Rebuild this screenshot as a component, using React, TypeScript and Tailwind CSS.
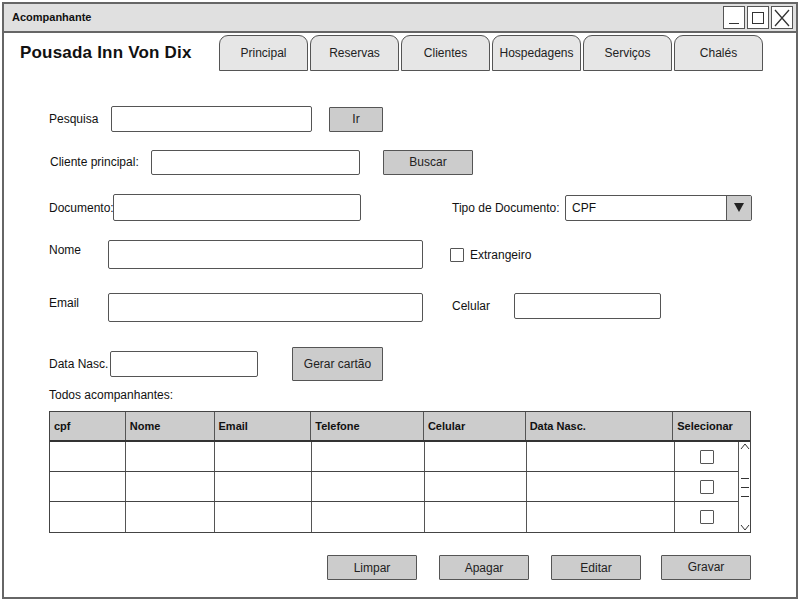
import React from "react"

const font = { fontFamily: '"Comic Sans MS", "Liberation Sans", sans-serif' }

const tabs = ["Principal", "Reservas", "Clientes", "Hospedagens", "Serviços", "Chalés"]

const columns = [
  { label: "cpf", w: "w-[76px]" },
  { label: "Nome", w: "w-[89px]" },
  { label: "Email", w: "w-[97px]" },
  { label: "Telefone", w: "w-[113px]" },
  { label: "Celular", w: "w-[102px]" },
  { label: "Data Nasc.", w: "w-[148px]" },
  { label: "Selecionar", w: "w-[77px]" },
]

function Input({ className }: { className: string }) {
  return <div className={"bg-white border-[1.5px] border-[#555] rounded-[2px] " + className} />
}

function Button({ label, className }: { label: string; className: string }) {
  return (
    <div className={"bg-[#cccccc] border-[1.5px] border-[#555] rounded-[1px] flex items-center justify-center text-[12px] text-[#222] " + className}>
      {label}
    </div>
  )
}

function Checkbox() {
  return <div className="w-[14px] h-[14px] border-[1.5px] border-[#555] bg-white rounded-[1px]" />
}

export default function App() {
  return (
    <div className="w-[800px] h-[600px] bg-white overflow-hidden text-[#111]" style={font}>
      <div className="ml-[2px] mt-[2px] w-[796px] h-[597px] border-2 border-[#666] flex flex-col">
        {/* Title bar */}
        <div className="h-[29px] bg-[#e0e0e0] border-b-2 border-[#666] flex items-center justify-between pl-[8px] pr-[3px]">
          <span className="text-[11px] font-bold">Acompanhante</span>
          <div className="flex gap-[2px]">
            <div className="w-[22px] h-[23px] border-[1.5px] border-[#555] bg-white flex items-end justify-center pb-[4px]">
              <div className="w-[10px] h-[1.5px] bg-[#333]" />
            </div>
            <div className="w-[22px] h-[23px] border-[1.5px] border-[#555] bg-white flex items-center justify-center">
              <div className="w-[12px] h-[12px] border-[1.5px] border-[#333]" />
            </div>
            <div className="w-[22px] h-[23px] border-[1.5px] border-[#555] bg-white flex items-center justify-center">
              <svg width="16" height="18" viewBox="0 0 16 18">
                <path d="M1 1 L15 17 M15 1 L1 17" stroke="#333" strokeWidth="1.3" fill="none" />
              </svg>
            </div>
          </div>
        </div>

        {/* Header with tabs */}
        <div className="mt-[2px] h-[36px] flex items-end">
          <div className="w-[215px] pl-[16px] self-center text-[17px] font-bold tracking-[0.2px]">Pousada Inn Von Dix</div>
          <div className="flex gap-[2px]">
            {tabs.map((t) => (
              <div
                key={t}
                className="w-[89px] h-[36px] bg-[#e6e6e6] border-[1.5px] border-[#555] rounded-t-[9px] flex items-center justify-center text-[12px] text-[#222]"
              >
                {t}
              </div>
            ))}
          </div>
        </div>

        {/* Pesquisa */}
        <div className="mt-[35px] pl-[45px] flex items-center h-[26px]">
          <span className="w-[62px] text-[12px]">Pesquisa</span>
          <Input className="w-[201px] h-[26px]" />
          <Button label="Ir" className="ml-[17px] w-[54px] h-[25px]" />
        </div>

        {/* Cliente principal */}
        <div className="mt-[17px] pl-[46px] flex items-center h-[26px]">
          <span className="w-[101px] text-[12px]">Cliente principal:</span>
          <Input className="w-[209px] h-[25px]" />
          <Button label="Buscar" className="ml-[23px] w-[90px] h-[25px]" />
        </div>

        {/* Documento */}
        <div className="mt-[19px] pl-[45px] flex items-center h-[27px]">
          <span className="w-[64px] text-[12px]">Documento:</span>
          <Input className="w-[248px] h-[27px]" />
          <span className="ml-[91px] w-[113px] text-[12px]">Tipo de Documento:</span>
          <div className="w-[187px] h-[26px] border-[1.5px] border-[#555] rounded-[2px] flex">
            <span className="flex-1 pl-[6px] text-[12px] flex items-center">CPF</span>
            <div className="w-[25px] bg-[#cccccc] border-l-[1.5px] border-[#555] flex items-center justify-center">
              <svg width="10" height="9" viewBox="0 0 10 9">
                <path d="M0 0 L10 0 L5 9 Z" fill="#222" />
              </svg>
            </div>
          </div>
        </div>

        {/* Nome */}
        <div className="mt-[19px] pl-[45px] flex items-center h-[29px]">
          <span className="w-[59px] text-[12px] self-start mt-[1px]">Nome</span>
          <Input className="w-[315px] h-[29px]" />
          <div className="ml-[27px]"><Checkbox /></div>
          <span className="ml-[6px] text-[12px]">Extrangeiro</span>
        </div>

        {/* Email */}
        <div className="mt-[24px] pl-[45px] flex items-start h-[29px]">
          <span className="w-[59px] text-[12px] mt-[1px]">Email</span>
          <Input className="w-[315px] h-[29px]" />
          <span className="ml-[29px] w-[62px] text-[12px] mt-[4px]">Celular</span>
          <Input className="w-[147px] h-[26px]" />
        </div>

        {/* Data Nasc. */}
        <div className="mt-[25px] pl-[45px] flex items-center h-[34px]">
          <span className="w-[61px] text-[12px]">Data Nasc.</span>
          <Input className="w-[148px] h-[26px]" />
          <Button label="Gerar cartão" className="ml-[34px] w-[91px] h-[34px]" />
        </div>

        <div className="mt-[7px] pl-[45px] text-[12px] h-[15px] leading-[15px]">Todos acompanhantes:</div>

        {/* Table */}
        <div className="mt-[8px] ml-[45px] w-[702px] border-[1.5px] border-[#444] flex flex-col">
          <div className="flex h-[30px] bg-[#cccccc] border-b-2 border-[#333]">
            {columns.map((c, i) => (
              <div
                key={c.label}
                className={
                  c.w +
                  " flex items-center pl-[4px] text-[11px] font-bold " +
                  (i < columns.length - 1 ? "border-r-[1.5px] border-[#555]" : "")
                }
              >
                {c.label}
              </div>
            ))}
          </div>
          <div className="flex">
            <div className="flex flex-col flex-1">
              {[0, 1, 2].map((r) => (
                <div key={r} className={"flex h-[30px] " + (r < 2 ? "border-b-[1.5px] border-[#444]" : "")}>
                  {columns.map((c, i) => (
                    <div
                      key={c.label}
                      className={
                        (i === columns.length - 1 ? "w-[63px] flex items-center justify-center" : c.w) +
                        (i < columns.length - 1 ? " border-r-[1.5px] border-[#555]" : "")
                      }
                    >
                      {i === columns.length - 1 && <Checkbox />}
                    </div>
                  ))}
                </div>
              ))}
            </div>
            <div className="w-[14px] border-l-[1.5px] border-[#555] flex flex-col items-center justify-between py-[1px]">
              <svg width="10" height="8" viewBox="0 0 10 8">
                <path d="M1 6 L5 1 L9 6" stroke="#333" strokeWidth="1" fill="none" />
              </svg>
              <div className="flex flex-col gap-[8px]">
                <div className="w-[8px] h-[1px] bg-[#333]" />
                <div className="w-[8px] h-[1px] bg-[#333]" />
                <div className="w-[8px] h-[1px] bg-[#333]" />
              </div>
              <svg width="10" height="8" viewBox="0 0 10 8">
                <path d="M1 2 L5 7 L9 2" stroke="#333" strokeWidth="1" fill="none" />
              </svg>
            </div>
          </div>
        </div>

        {/* Bottom buttons */}
        <div className="mt-[22px] pl-[323px] flex items-center gap-[22px]">
          <Button label="Limpar" className="w-[90px] h-[25px]" />
          <Button label="Apagar" className="w-[90px] h-[25px]" />
          <Button label="Editar" className="w-[90px] h-[25px]" />
          <Button label="Gravar" className="-ml-[2px] w-[90px] h-[25px] -mt-[1px]" />
        </div>
      </div>
    </div>
  )
}
